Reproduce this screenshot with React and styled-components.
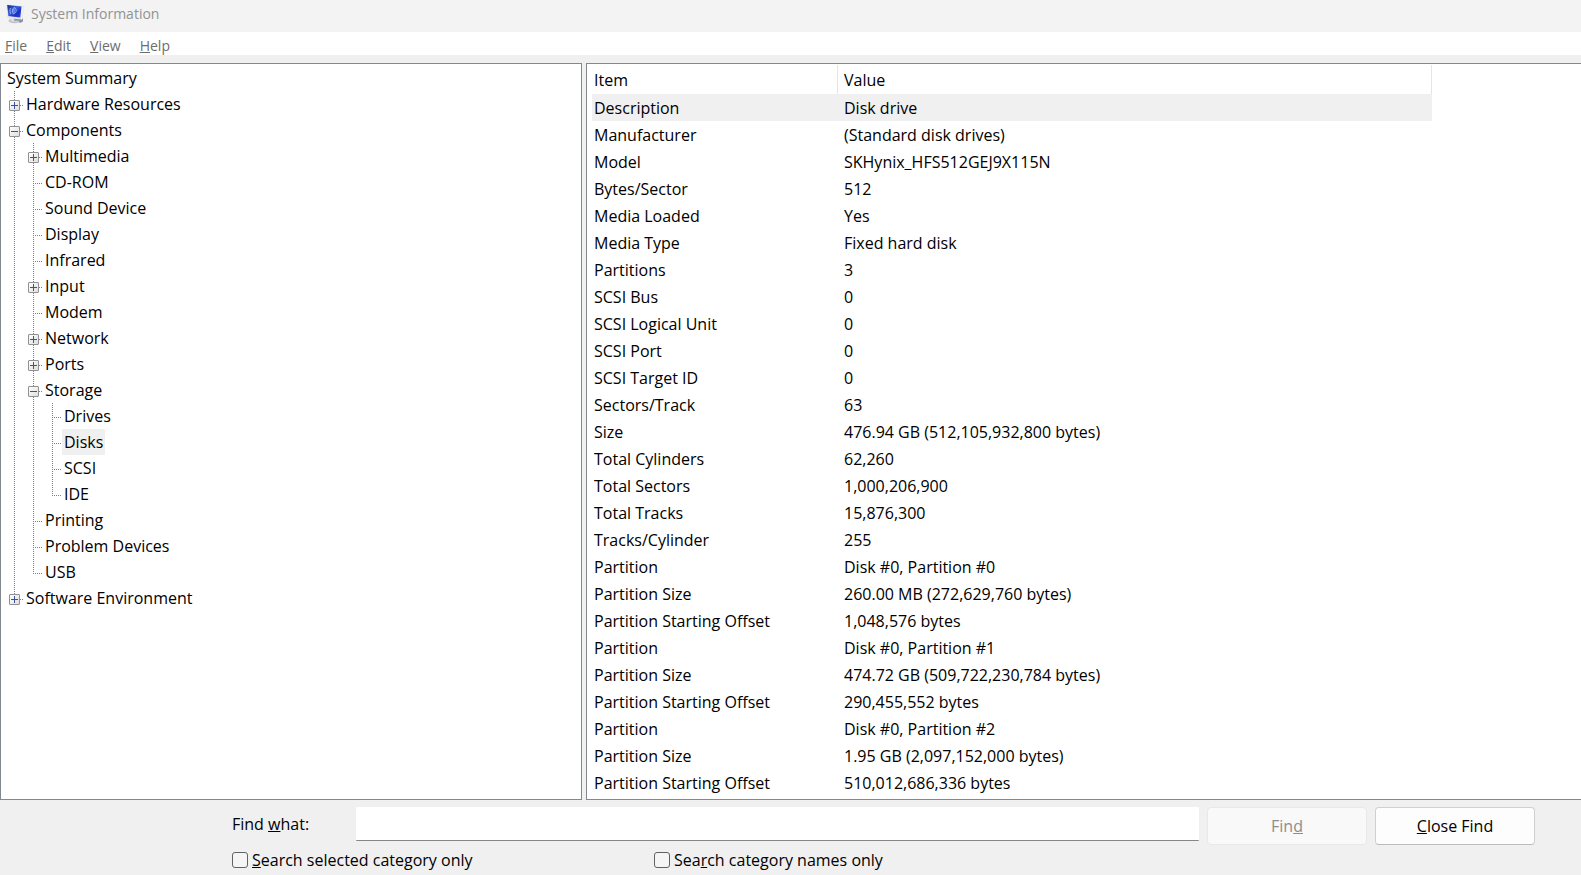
import React, { useState } from 'react';
import styled, { createGlobalStyle } from 'styled-components';

const GlobalStyle = createGlobalStyle`
    * {
        box-sizing: border-box;
    }

    body {
        margin: 0;
        background: #f0f0f0;
        color: #000;
        font-family: 'Open Sans', 'Noto Sans', sans-serif;
        font-size: 16px;
    }

    button, input {
        font: inherit;
        color: inherit;
    }
`;

const Window = styled.div`
    display: flex;
    flex-direction: column;
    min-height: 100vh;
`;

const TitleBar = styled.header`
    display: flex;
    align-items: center;
    gap: 6px;
    height: 32px;
    padding: 0 6px 4px;
    background: #f3f3f3;
    color: #929292;

    h1 {
        margin: 0;
        font-size: 14px;
        font-weight: normal;
        line-height: 22px;
    }
`;

const MenuBar = styled.nav`
    display: flex;
    height: 23px;
    padding: 0 5px;
    gap: 19px;
    background: #fff;
`;

const MenuButton = styled.button`
    padding: 2px 0 0;
    border: 0;
    background: none;
    color: #6d6d6d;
    font-size: 14px;
    line-height: 24px;
`;

const Panels = styled.main`
    display: grid;
    grid-template-columns: 582px 1fr;
    gap: 4px;
    flex: 1;
    padding-top: 8px;
`;

const Panel = styled.section`
    min-width: 0;
    border: 1px solid #828790;
    background: #fff;
`;

const TreePanel = styled(Panel)`
    padding: 1px 4px;
`;

const DetailsPanel = styled(Panel)`
    padding: 1px 0 2px 5px;
    border-right: 0;
    overflow: hidden;
`;

const Branch = styled.ul`
    margin: 0;
    padding: 0;
    list-style: none;
`;

const TreeRow = styled.div`
    display: flex;
    height: 26px;
`;

const dots = (direction) =>
    `repeating-linear-gradient(${direction}, #808080 0 1px, transparent 1px 2px)`;

const Guide = styled.span`
    display: flex;
    align-items: flex-start;
    flex: none;
    width: 19px;
    height: 26px;
    padding: 9px 4px 0;
    background-image: ${dots('to bottom')}, ${dots('to right')};
    background-repeat: no-repeat;
    background-position: 9px 0, 9px 14px;
    background-size:
        1px ${({ $line }) => ({ full: '26px', half: '15px' }[$line] || '0')},
        ${({ $tick }) => ($tick ? '9px' : '0')} 1px;
`;

const Expander = styled.button`
    display: block;
    width: 11px;
    height: 11px;
    padding: 0;
    border: 1px solid #919191;
    border-radius: 1px;
    background: linear-gradient(135deg, #fff, #dedede);

    svg {
        display: block;
    }
`;

const TreeLabel = styled.span`
    padding: 0 2px;
    line-height: 26px;
    background: ${({ $selected }) => ($selected ? '#f0f0f0' : 'none')};
`;

const Table = styled.table`
    width: 840px;
    border-collapse: collapse;
    table-layout: fixed;
    text-align: left;

    th, td {
        height: 27px;
        padding: 0 0 0 6px;
        line-height: 26px;
        font-weight: normal;
        white-space: nowrap;
    }

    th {
        height: 29px;
        background: linear-gradient(#e5e5e5, #e5e5e5) right / 1px 100% no-repeat;
    }

    th:first-child, td:first-child {
        width: 246px;
        padding-left: 2px;
    }
`;

const ItemRow = styled.tr`
    background: ${({ $selected }) => ($selected ? '#f0f0f0' : 'none')};
`;

const FindBar = styled.form`
    display: grid;
    grid-template-columns: 116px 1fr 160px 160px;
    column-gap: 8px;
    row-gap: 3px;
    padding: 7px 46px 3px 232px;
`;

const FindLabel = styled.label`
    line-height: 34px;
`;

const FindInput = styled.input`
    width: 100%;
    height: 34px;
    padding: 0 8px;
    border: 0;
    border-bottom: 1px solid #868686;
    border-radius: 1px;
    background: #fff;
    outline: none;
`;

const FindButton = styled.button`
    height: 38px;
    padding: 0;
    border: 1px solid #d0d0d0;
    border-bottom-color: #bcbcbc;
    border-radius: 4px;
    background: #fdfdfd;

    &:disabled {
        border-color: #e8e8e8;
        background: #f9f9f9;
        color: #8d8d8d;
    }
`;

const Options = styled.div`
    display: grid;
    grid-column: 1 / -1;
    grid-template-columns: 422px 1fr;
`;

const Option = styled.label`
    display: flex;
    align-items: center;
    gap: 4px;
    height: 24px;
`;

const CheckBox = styled.input`
    appearance: none;
    width: 16px;
    height: 16px;
    margin: 0;
    border: 1px solid #626262;
    border-radius: 3px;
    background: #f5f5f5;

    &:checked {
        background: #0067c0;
    }
`;

const tree = {
    name: 'System Summary',
    children: [
        { name: 'Hardware Resources', closed: true },
        {
            name: 'Components',
            children: [
                { name: 'Multimedia', closed: true },
                { name: 'CD-ROM' },
                { name: 'Sound Device' },
                { name: 'Display' },
                { name: 'Infrared' },
                { name: 'Input', closed: true },
                { name: 'Modem' },
                { name: 'Network', closed: true },
                { name: 'Ports', closed: true },
                {
                    name: 'Storage',
                    children: [{ name: 'Drives' }, { name: 'Disks' }, { name: 'SCSI' }, { name: 'IDE' }],
                },
                { name: 'Printing' },
                { name: 'Problem Devices' },
                { name: 'USB' },
            ],
        },
        { name: 'Software Environment', closed: true },
    ],
};

const items = [
    ['Description', 'Disk drive'],
    ['Manufacturer', '(Standard disk drives)'],
    ['Model', 'SKHynix_HFS512GEJ9X115N'],
    ['Bytes/Sector', '512'],
    ['Media Loaded', 'Yes'],
    ['Media Type', 'Fixed hard disk'],
    ['Partitions', '3'],
    ['SCSI Bus', '0'],
    ['SCSI Logical Unit', '0'],
    ['SCSI Port', '0'],
    ['SCSI Target ID', '0'],
    ['Sectors/Track', '63'],
    ['Size', '476.94 GB (512,105,932,800 bytes)'],
    ['Total Cylinders', '62,260'],
    ['Total Sectors', '1,000,206,900'],
    ['Total Tracks', '15,876,300'],
    ['Tracks/Cylinder', '255'],
    ['Partition', 'Disk #0, Partition #0'],
    ['Partition Size', '260.00 MB (272,629,760 bytes)'],
    ['Partition Starting Offset', '1,048,576 bytes'],
    ['Partition', 'Disk #0, Partition #1'],
    ['Partition Size', '474.72 GB (509,722,230,784 bytes)'],
    ['Partition Starting Offset', '290,455,552 bytes'],
    ['Partition', 'Disk #0, Partition #2'],
    ['Partition Size', '1.95 GB (2,097,152,000 bytes)'],
    ['Partition Starting Offset', '510,012,686,336 bytes'],
];

const ComputerIcon = () => (
    <svg width="19" height="20" viewBox="0 0 19 20" aria-hidden="true">
        <defs>
            <linearGradient id="screen" x1="0" y1="0" x2="1" y2="1">
                <stop offset="0" stopColor="#101f8c" />
                <stop offset="0.4" stopColor="#3d62d8" />
                <stop offset="0.7" stopColor="#1a2fc4" />
                <stop offset="1" stopColor="#2c50e0" />
            </linearGradient>
        </defs>
        <ellipse cx="8.500" cy="16.800" rx="6" ry="2.400" fill="#bfc2ca" />
        <ellipse cx="9" cy="16.200" rx="4.500" ry="1.400" fill="#dcdfe6" />
        <path d="M8 13l5 1 .5 2.500-5 .5z" fill="#8f95a3" />
        <path d="M13 14l4 .5v3l-3 1.500-1.500-2z" fill="#8d929c" />
        <path d="M0.500 1.500l1-1L17 2l1 1-1.500 12-1 .5L1.500 14z" fill="#dfe2e8" />
        <path d="M1.200 1L15.500 2.500l-1.300 11L2.400 12z" fill="url(#screen)" />
        <path d="M4.500 4c-1 2-.5 4.500.5 6M8 3.500c-2 1.500-2 5-.5 6.500M8 3.500c3 1 3 5-.5 6.500M8 5v4" fill="none" stroke="#a9c3f5" strokeWidth="0.800" />
        <path d="M16 2.500l1.500.5-1.500 12-1 .5z" fill="#f4f5f8" />
    </svg>
);

const TreeNode = ({ node, root, last, guides = [] }) => {
    const [open, setOpen] = useState(!node.closed);
    const hasChildren = Boolean(node.children || node.closed);
    const childGuides = root ? [] : [...guides, last ? 'none' : 'full'];

    return (
        <li role="treeitem" aria-expanded={hasChildren ? open : undefined} aria-selected={node.name === 'Disks'}>
            <TreeRow>
                {guides.map((line, index) => <Guide key={index} $line={line} />)}
                {!root && (
                    <Guide $line={last ? 'half' : 'full'} $tick>
                        {hasChildren && (
                            <Expander type="button" aria-label={`Toggle ${node.name}`} onClick={() => setOpen(!open)}>
                                <svg width="9" height="9" viewBox="0 0 9 9">
                                    <path d={open ? 'M1 4.500h7' : 'M1 4.500h7M4.500 1v7'} stroke="#3c50a0" />
                                </svg>
                            </Expander>
                        )}
                    </Guide>
                )}
                <TreeLabel $selected={node.name === 'Disks'}>{node.name}</TreeLabel>
            </TreeRow>
            {open && node.children && (
                <Branch role="group">
                    {node.children.map((child, index) => (
                        <TreeNode
                            key={child.name}
                            node={child}
                            last={index === node.children.length - 1}
                            guides={childGuides}
                        />
                    ))}
                </Branch>
            )}
        </li>
    );
};

const App = () => {
    return (
        <Window>
            <GlobalStyle />
            <TitleBar>
                <ComputerIcon />
                <h1>System Information</h1>
            </TitleBar>
            <MenuBar>
                <MenuButton type="button"><u>F</u>ile</MenuButton>
                <MenuButton type="button"><u>E</u>dit</MenuButton>
                <MenuButton type="button"><u>V</u>iew</MenuButton>
                <MenuButton type="button"><u>H</u>elp</MenuButton>
            </MenuBar>
            <Panels>
                <TreePanel>
                    <Branch role="tree" aria-label="Categories">
                        <TreeNode node={tree} root />
                    </Branch>
                </TreePanel>
                <DetailsPanel>
                    <Table>
                        <thead>
                            <tr>
                                <th scope="col">Item</th>
                                <th scope="col">Value</th>
                            </tr>
                        </thead>
                        <tbody>
                            {items.map(([item, value], index) => (
                                <ItemRow key={index} $selected={index === 0}>
                                    <td>{item}</td>
                                    <td>{value}</td>
                                </ItemRow>
                            ))}
                        </tbody>
                    </Table>
                </DetailsPanel>
            </Panels>
            <FindBar onSubmit={(e) => e.preventDefault()}>
                <FindLabel htmlFor="find-what">Find <u>w</u>hat:</FindLabel>
                <FindInput id="find-what" type="text" />
                <FindButton type="submit" disabled><span>Fin<u>d</u></span></FindButton>
                <FindButton type="button"><u>C</u>lose Find</FindButton>
                <Options>
                    <Option>
                        <CheckBox type="checkbox" />
                        <span><u>S</u>earch selected category only</span>
                    </Option>
                    <Option>
                        <CheckBox type="checkbox" />
                        <span>Sea<u>r</u>ch category names only</span>
                    </Option>
                </Options>
            </FindBar>
        </Window>
    );
};

export default App;
